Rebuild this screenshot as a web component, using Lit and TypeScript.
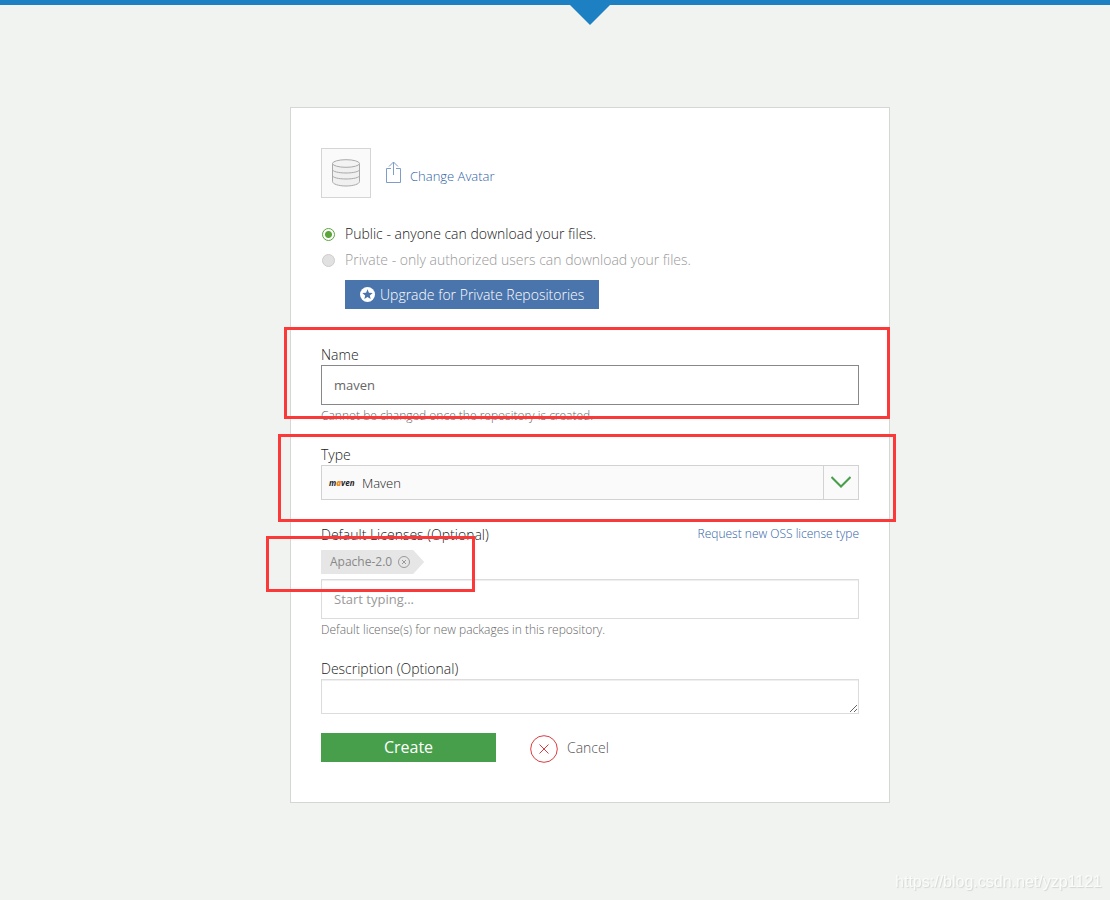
import { LitElement, html, css } from "lit";
import { customElement, state } from "lit/decorators.js";

@customElement("app-root")
export class AppRoot extends LitElement {
  static styles = css`
    :host {
      display: block;
      min-height: 100vh;
      background: #f0f3f0;
      color: #222;
      font: 300 14px/20px "Open Sans", sans-serif;
    }
    *, *::before, *::after { box-sizing: border-box; }
    .topbar { height: 5px; background: #1d80c3; }
    .page { padding-left: 70px; }
    .pointer { display: block; width: 40px; height: 20px; margin: 0 auto; fill: #1d80c3; }
    .card {
      max-width: 600px;
      margin: 82px auto 0;
      padding: 40px 30px;
      background: #fff;
      border: 1px solid #d4d7d4;
    }
    a { color: #2f62a6; text-decoration: none; }
    svg { display: block; flex: none; }
    .avatar-row { display: flex; align-items: center; margin-bottom: 23px; }
    .avatar {
      display: grid; place-items: center;
      width: 50px; height: 50px; margin-right: 15px;
      background: #fafafa; border: 1px solid #d5d5d5;
    }
    .change { display: flex; align-items: center; gap: 9px; font-size: 13px; }
    .change span { padding-top: 6px; }
    .choice { display: flex; align-items: center; gap: 10px; height: 26px; }
    .choice input {
      appearance: none; flex: none;
      width: 13px; height: 13px; margin: 0 0 0 1px;
      border: 1px solid #5ba53b; border-radius: 50%; background: #fff;
    }
    .choice input:checked { background: radial-gradient(circle, #5ba53b 3px, #fff 4px); }
    .choice input:disabled { border-color: #ccc; background: #e1e1e1; }
    .muted { color: #999; }
    .upgrade {
      display: flex; align-items: center; gap: 5px;
      height: 29px; margin: 7px 0 36px 24px; padding: 0 15px;
      border: 0; background: #4a74ac; color: #fff;
      font: 300 14px/20px "Open Sans", sans-serif;
    }
    .field { position: relative; margin-bottom: 20px; }
    .type { margin-bottom: 25px; }
    .label { display: block; }
    .label-row { display: flex; justify-content: space-between; margin-bottom: 5px; }
    .label-row a { font-size: 12px; line-height: 18px; }
    .text, .area, .select {
      display: block; width: 100%; margin: 0;
      border: 1px solid #dcdcdc; border-radius: 0; outline: 0;
      background: #fff; color: #666;
      font: 400 13px/20px "Open Sans", sans-serif;
    }
    .text { height: 40px; padding: 0 12px; box-shadow: inset 0 1px 1px #eee; }
    .text::placeholder { color: #999; opacity: 1; }
    .text.focused { border-color: #888; box-shadow: none; }
    .area { height: 35px; padding: 6px 12px; resize: both; box-shadow: inset 0 1px 1px #eee; }
    .help { margin: 0; padding-top: 2px; color: #666; font-size: 12px; line-height: 18px; }
    .select-box { position: relative; }
    .select {
      appearance: none; height: 35px; padding: 0 40px;
      background: #fafafa; border-color: #d2d2d2; color: #222; font-weight: 300;
    }
    .logo {
      position: absolute; left: 8px; top: 8px; pointer-events: none;
      color: #222; font: italic 700 8px/20px "Open Sans", sans-serif;
    }
    .logo b { color: #ee8b22; }
    .arrow {
      position: absolute; inset: 0 0 0 auto; width: 36px; padding-bottom: 2px; pointer-events: none;
      display: grid; place-items: center; border: 1px solid #d2d2d2;
    }
    .tag-row { position: relative; display: flex; margin-bottom: 5px; }
    .tag {
      display: flex; align-items: center; gap: 6px;
      height: 24px; padding: 0 14px 0 9px;
      background: #e6e6e6; color: #888; font-size: 12px; font-weight: 400;
      clip-path: polygon(0 0, calc(100% - 11px) 0, 100% 50%, calc(100% - 11px) 100%, 0 100%);
    }
    .remove { padding: 0; border: 0; background: none; }
    .mark { position: absolute; border: 3px solid #fc3939; pointer-events: none; z-index: 1; }
    .mark-name { inset: -18px -31px 6px -37px; }
    .mark-type { inset: -11px -37px -22px -43px; }
    .mark-tag { top: -14px; bottom: -18px; left: -55px; width: 209px; }
    .actions { display: flex; align-items: flex-start; gap: 34px; }
    .description { margin-bottom: 19px; }
    .create {
      width: 175px; height: 29px; padding: 0 0 2px; border: 0;
      background: #479f4b; color: #fff;
      font: 400 16px/20px "Open Sans", sans-serif;
    }
    .cancel {
      display: flex; align-items: center; gap: 9px; height: 29px; padding: 0;
      border: 0; background: none; color: #555;
      font: 300 14px/20px "Open Sans", sans-serif;
    }
    .cancel svg { margin-top: 3px; }
    .watermark {
      position: fixed; right: 8px; bottom: 8px;
      color: #fafbfa; text-shadow: 1px 1px 1px #d4d6d4;
      font: 400 16px/20px "Liberation Sans", sans-serif;
    }
  `;

  @state() private name = "maven";
  @state() private licenses = ["Apache-2.0"];

  render() {
    return html`
      <div class="topbar"></div>
      <main class="page">
        <svg class="pointer" viewBox="0 0 40 20"><path d="M0 0h40L20 20z" /></svg>
        <form class="card" @submit=${(e: Event) => e.preventDefault()}>
          <div class="avatar-row">
            <div class="avatar">
              <svg width="28" height="28" viewBox="0 0 28 28" fill="none" stroke="#aaa" stroke-width="1">
                <path fill="#f0f0f0" d="M.5 4.5v18C.5 25 6.500 27 14 27s13.500-2 13.500-4.500v-18" />
                <ellipse cx="14" cy="4.500" rx="13.500" ry="3.800" fill="#f3f3f3" />
                <path d="M.5 10.500C.5 12.500 6.500 14 14 14s13.500-1.500 13.500-3.500M.5 16.500C.5 18.500 6.500 20 14 20s13.500-1.500 13.500-3.500" />
              </svg>
            </div>
            <a class="change" href="#">
              <svg width="15" height="24" viewBox="0 0 15 24" fill="none" stroke="#7f9dc8">
                <path d="M5 7.500H.5v14h14v-14H10M7.500 14V1M3 5.500L7.500 1 12 5.500" />
              </svg>
              <span>Change Avatar</span>
            </a>
          </div>
          <label class="choice">
            <input type="radio" name="visibility" checked />
            <span>Public - anyone can download your files.</span>
          </label>
          <label class="choice muted">
            <input type="radio" name="visibility" disabled />
            <span>Private - only authorized users can download your files.</span>
          </label>
          <button class="upgrade" type="button">
            <svg width="15" height="15" viewBox="0 0 15 15">
              <circle cx="7.500" cy="7.500" r="7.500" fill="#fff" />
              <path fill="#4a74ac" d="M7.500 2.200l1.400 3.500 3.800.3-2.900 2.400.9 3.700-3.200-2-3.200 2 .9-3.700L2.300 6l3.800-.3z" />
            </svg>
            <span>Upgrade for Private Repositories</span>
          </button>

          <div class="field">
            <label class="label" for="name">Name</label>
            <input class="text focused" id="name" type="text" .value=${this.name}
              @input=${(e: Event) => (this.name = (e.target as HTMLInputElement).value)} />
            <p class="help">Cannot be changed once the repository is created.</p>
            <div class="mark mark-name"></div>
          </div>

          <div class="field type">
            <label class="label" for="type">Type</label>
            <div class="select-box">
              <select class="select" id="type"><option>Maven</option></select>
              <span class="logo" aria-hidden="true">m<b>a</b>ven</span>
              <span class="arrow">
                <svg width="20" height="12" viewBox="0 0 20 12" fill="none" stroke="#479f4b" stroke-width="2">
                  <path d="M.5 1L10 10.500 19.500 1" />
                </svg>
              </span>
            </div>
            <div class="mark mark-type"></div>
          </div>

          <div class="field">
            <div class="label-row">
              <label for="license">Default Licenses (Optional)</label>
              <a href="#">Request new OSS license type</a>
            </div>
            <div class="tag-row">
              ${this.licenses.map(
                (license) => html`<span class="tag">${license}
                  <button class="remove" type="button" aria-label="Remove">
                    <svg width="12" height="12" viewBox="0 0 12 12" fill="none" stroke="#999">
                      <circle cx="6" cy="6" r="5.500" />
                      <path d="M4 4l4 4M8 4l-4 4" />
                    </svg>
                  </button>
                </span>`
              )}
              <div class="mark mark-tag"></div>
            </div>
            <input class="text" id="license" type="text" placeholder="Start typing..." />
            <p class="help">Default license(s) for new packages in this repository.</p>
          </div>

          <div class="field description">
            <label class="label" for="description">Description (Optional)</label>
            <textarea class="area" id="description"></textarea>
          </div>

          <div class="actions">
            <button class="create" type="submit">Create</button>
            <button class="cancel" type="button">
              <svg width="28" height="28" viewBox="0 0 28 28" fill="none" stroke="#dc3c40">
                <circle cx="14" cy="14" r="13.300" />
                <path d="M9.500 9.500l9 9M18.500 9.500l-9 9" />
              </svg>
              <span>Cancel</span>
            </button>
          </div>
        </form>
      </main>
      <div class="watermark">https://blog.csdn.net/yzp1121</div>
    `;
  }
}
